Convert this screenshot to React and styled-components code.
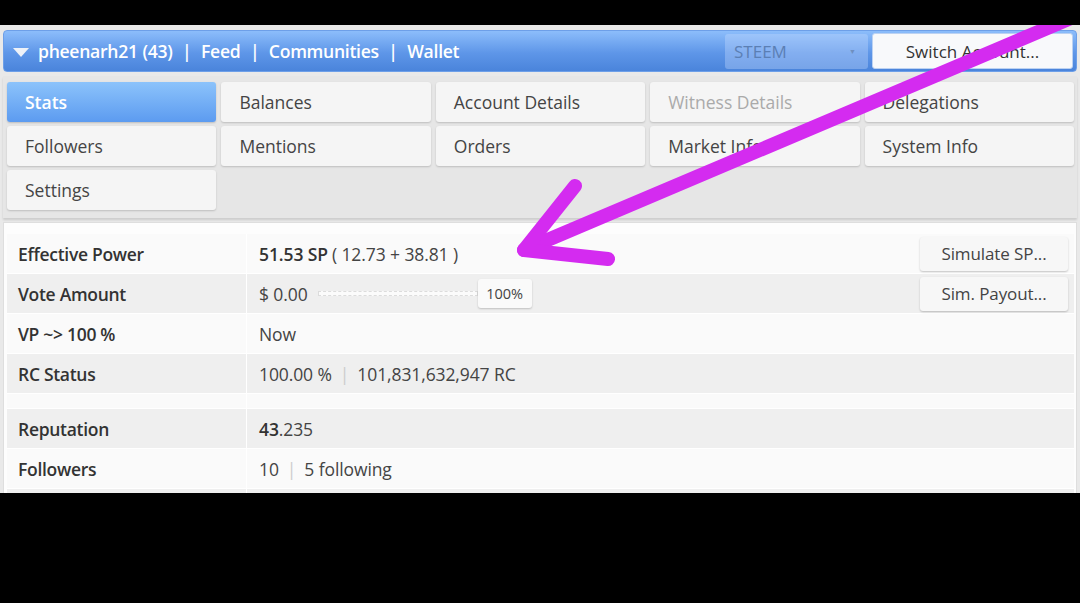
import React from "react";
import styled, { createGlobalStyle } from "styled-components";

const Global = createGlobalStyle`
  html, body { margin: 0; padding: 0; background: #000; }
  body { font-family: "Open Sans", "Liberation Sans", sans-serif; }
  * { box-sizing: border-box; }
`;

const Screen = styled.div`
  width: 1080px;
  height: 603px;
  background: #000;
  display: flex;
  flex-direction: column;
  padding-top: 25px;
  position: relative;
  overflow: hidden;
`;

const Page = styled.div`
  height: 468px;
  background: #e9e9e9;
  padding: 5px 3px 0 3px;
  display: flex;
  flex-direction: column;
  overflow: hidden;
  position: relative;
`;

const Header = styled.div`
  height: 42px;
  border-radius: 4px;
  border: 1px solid #6d9fe8;
  background: linear-gradient(#8cbdfb, #5e96e8 55%, #4a84db);
  display: flex;
  align-items: center;
  padding: 0 3px 0 9px;
  flex-shrink: 0;
`;

const Caret = styled.span`
  width: 0;
  height: 0;
  border-left: 8px solid transparent;
  border-right: 8px solid transparent;
  border-top: 9px solid #eef2f8;
  margin-right: 9px;
  margin-top: 2px;
`;

const Nav = styled.div`
  color: #fff;
  font-size: 17.6px;
  font-weight: 600;
  letter-spacing: -0.3px;
  word-spacing: 0.5px;
  flex: 1;
  white-space: pre;
`;

const Select = styled.div`
  width: 143px;
  height: 35px;
  border-radius: 3px;
  background: rgba(200, 222, 255, 0.35);
  color: #5b7fb4;
  font-size: 17px;
  display: flex;
  align-items: center;
  justify-content: space-between;
  padding: 0 12px 0 9px;
  margin-right: 4px;
`;

const SelArrow = styled.span`
  font-size: 7px;
  color: #6f8fc0;
`;

const SwitchBtn = styled.div`
  width: 201px;
  height: 36px;
  border-radius: 3px;
  background: #f8f9fb;
  border: 1px solid #bcd2f2;
  color: #333;
  font-size: 17px;
  display: flex;
  align-items: center;
  justify-content: center;
`;

const TabsPanel = styled.div`
  margin-top: 4px;
  background: #e6e6e6;
  padding: 6px 3px 8px 4px;
  display: grid;
  grid-template-columns: repeat(5, 1fr);
  gap: 4px 5px;
  box-shadow: 0 2px 2px rgba(0, 0, 0, 0.12);
  flex-shrink: 0;
`;

const Tab = styled.div`
  height: 40px;
  border-radius: 3px;
  display: flex;
  align-items: center;
  padding-left: 18px;
  font-size: 17.5px;
  background: ${p => (p.$active ? "linear-gradient(#8cc3fb, #5c9bf0)" : "#f5f5f5")};
  color: ${p => (p.$active ? "#fff" : p.$disabled ? "#aaa" : "#444")};
  font-weight: ${p => (p.$active ? 600 : 400)};
  box-shadow: 0 1px 2px rgba(0, 0, 0, 0.18);
`;

const TablePanel = styled.div`
  margin-top: 4px;
  flex: 1;
  background: #fdfdfd;
  border: 1px solid #dedede;
  padding: 11px 2px 0 3px;
`;

const Table = styled.div`
  display: flex;
  flex-direction: column;
  gap: 1px;
  background: #fff;
`;

const Row = styled.div`
  display: grid;
  grid-template-columns: 239px 1fr;
  column-gap: 1px;
  height: ${p => (p.$spacer ? "14px" : "39px")};
  background: #fff;
`;

const Cell = styled.div`
  background: ${p => (p.$alt ? "#efefef" : "#fafafa")};
  display: flex;
  align-items: center;
  font-size: 17.5px;
`;

const Label = styled(Cell)`
  padding-left: 11px;
  color: #333;
  font-weight: 600;
  letter-spacing: -0.3px;
`;

const Value = styled(Cell)`
  padding-left: 12px;
  padding-right: 6px;
  color: #444;
  letter-spacing: -0.1px;
`;

const Strong = styled.b`
  font-weight: 600;
  color: #333;
  margin-right: ${p => (p.$tight ? "0" : "4px")};
`;

const Sep = styled.span`
  color: #ccc;
  margin: 0 8px;
`;

const Spacer = styled.span`
  flex: 1;
`;

const SideBtn = styled.div`
  width: 148px;
  height: 34px;
  background: #f7f7f7;
  border-radius: 3px;
  box-shadow: 0 1px 2px rgba(0, 0, 0, 0.22);
  display: flex;
  align-items: center;
  justify-content: center;
  color: #444;
  font-size: 17px;
`;

const Slider = styled.div`
  display: flex;
  align-items: center;
  margin-left: 10px;
`;

const Track = styled.div`
  width: 160px;
  height: 5px;
  border: 1px dashed #dcdcdc;
  background: #fbfbfb;
`;

const Handle = styled.div`
  width: 54px;
  height: 29px;
  background: #fafafa;
  border-radius: 3px;
  box-shadow: 0 1px 2px rgba(0, 0, 0, 0.2);
  display: flex;
  align-items: center;
  justify-content: center;
  font-size: 14.5px;
  color: #444;
`;

const Overlay = styled.svg`
  position: absolute;
  left: 0;
  top: 0;
  width: 1080px;
  height: 603px;
  pointer-events: none;
`;

const TopMask = styled.div`
  position: absolute;
  left: 0;
  top: 0;
  width: 1080px;
  height: 25px;
  background: #000;
`;

const tabs = [
  { t: "Stats", active: true },
  { t: "Balances" },
  { t: "Account Details" },
  { t: "Witness Details", disabled: true },
  { t: "Delegations" },
  { t: "Followers" },
  { t: "Mentions" },
  { t: "Orders" },
  { t: "Market Info" },
  { t: "System Info" },
  { t: "Settings" },
];

export default function App() {
  return (
    <Screen>
      <Global />
      <Page>
        <Header>
          <Caret />
          <Nav>{"pheenarh21 (43)  |  Feed  |  Communities  |  Wallet"}</Nav>
          <Select>
            <span>STEEM</span>
            <SelArrow>▼</SelArrow>
          </Select>
          <SwitchBtn>Switch Account...</SwitchBtn>
        </Header>
        <TabsPanel>
          {tabs.map(x => (
            <Tab key={x.t} $active={x.active} $disabled={x.disabled}>
              {x.t}
            </Tab>
          ))}
        </TabsPanel>
        <TablePanel>
          <Table>
            <Row>
              <Label>Effective Power</Label>
              <Value>
                <Strong>51.53 SP</Strong>( 12.73 + 38.81 )
                <Spacer />
                <SideBtn>Simulate SP...</SideBtn>
              </Value>
            </Row>
            <Row>
              <Label $alt>Vote Amount</Label>
              <Value $alt>
                $ 0.00
                <Slider>
                  <Track />
                  <Handle>100%</Handle>
                </Slider>
                <Spacer />
                <SideBtn>Sim. Payout...</SideBtn>
              </Value>
            </Row>
            <Row>
              <Label>VP ~&gt; 100 %</Label>
              <Value>Now</Value>
            </Row>
            <Row>
              <Label $alt>RC Status</Label>
              <Value $alt>
                100.00 %<Sep>|</Sep>101,831,632,947 RC
              </Value>
            </Row>
            <Row $spacer>
              <Label />
              <Value />
            </Row>
            <Row>
              <Label $alt>Reputation</Label>
              <Value $alt>
                <Strong $tight>43</Strong>.235
              </Value>
            </Row>
            <Row>
              <Label>Followers</Label>
              <Value>
                10<Sep>|</Sep>5 following
              </Value>
            </Row>
            <Row>
              <Label $alt />
              <Value $alt />
            </Row>
          </Table>
        </TablePanel>
      </Page>
      <Overlay viewBox="0 0 1080 603">
        <g stroke="#d42bf0" strokeWidth="14" strokeLinecap="round" strokeLinejoin="round" fill="none">
          <line x1="524" y1="250" x2="1090" y2="10" />
          <polyline points="575,186 524,250 608,259" />
        </g>
      </Overlay>
      <TopMask />
    </Screen>
  );
}
